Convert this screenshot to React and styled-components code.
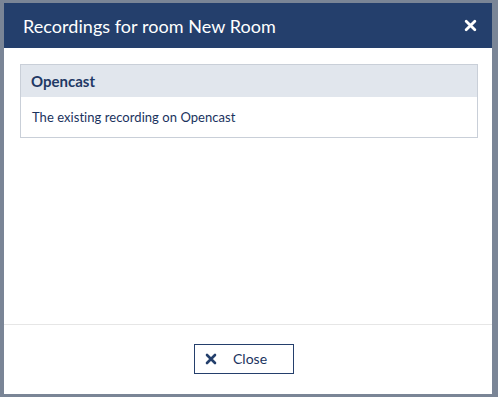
import styled, { createGlobalStyle } from "styled-components";

const GlobalStyle = createGlobalStyle`
  html, body {
    margin: 0;
    padding: 0;
    height: 100%;
    background: #7a8596;
    font-family: Lato, "Noto Sans", sans-serif;
  }
  #root {
    height: 100%;
  }
`;

const Backdrop = styled.div`
  height: 397px;
  box-sizing: border-box;
  padding: 3px 6px 3px 4px;
  display: flex;
`;

const Dialog = styled.div`
  flex: 1;
  display: flex;
  flex-direction: column;
  background: #fff;
`;

const Header = styled.div`
  height: 45px;
  flex-shrink: 0;
  background: #243f6c;
  color: #fff;
  display: flex;
  align-items: center;
  justify-content: space-between;
  padding: 0 15px 0 19px;
  .title {
    font-size: 18px;
    letter-spacing: 0.05px;
  }
`;

const IconButton = styled.button`
  background: none;
  border: 0;
  padding: 0;
  display: flex;
  color: #fff;
  cursor: pointer;
`;

const Body = styled.div`
  flex: 1;
  padding: 16px 14px 0 16px;
`;

const Card = styled.div`
  border: 1px solid #c9cfd8;
`;

const CardHeader = styled.div`
  height: 32px;
  background: #e1e6ed;
  display: flex;
  align-items: center;
  padding: 0 10px;
  font-size: 15px;
  font-weight: bold;
  color: #1f3965;
`;

const CardBody = styled.div`
  height: 40px;
  display: flex;
  align-items: center;
  padding: 0 11px;
  font-size: 13px;
  letter-spacing: 0.05px;
  color: #1a335e;
`;

const Footer = styled.div`
  height: 69px;
  border-top: 1px solid #e6e6e6;
  display: flex;
  align-items: center;
  justify-content: center;
  padding-right: 8px;
`;

const Button = styled.button`
  width: 100px;
  height: 30px;
  margin-top: -2px;
  box-sizing: border-box;
  border: 1px solid #243f6c;
  background: #fff;
  color: #1a335e;
  font-family: Lato, "Noto Sans", sans-serif;
  font-size: 14px;
  display: flex;
  align-items: center;
  gap: 16px;
  padding: 0 0 0 10px;
  cursor: pointer;
`;

const Cross = ({ size = 12, color = "currentColor" }) => (
  <svg width={size} height={size} viewBox="0 0 12 12">
    <path
      d="M2 2 L10 10 M10 2 L2 10"
      stroke={color}
      strokeWidth="2.6"
      strokeLinecap="round"
    />
  </svg>
);

export default function App() {
  return (
    <>
      <GlobalStyle />
      <Backdrop>
        <Dialog>
          <Header>
            <span className="title">Recordings for room New Room</span>
            <IconButton aria-label="Close">
              <Cross size={13} />
            </IconButton>
          </Header>
          <Body>
            <Card>
              <CardHeader>Opencast</CardHeader>
              <CardBody>The existing recording on Opencast</CardBody>
            </Card>
          </Body>
          <Footer>
            <Button>
              <Cross size={12} color="#243f6c" />
              Close
            </Button>
          </Footer>
        </Dialog>
      </Backdrop>
    </>
  );
}
